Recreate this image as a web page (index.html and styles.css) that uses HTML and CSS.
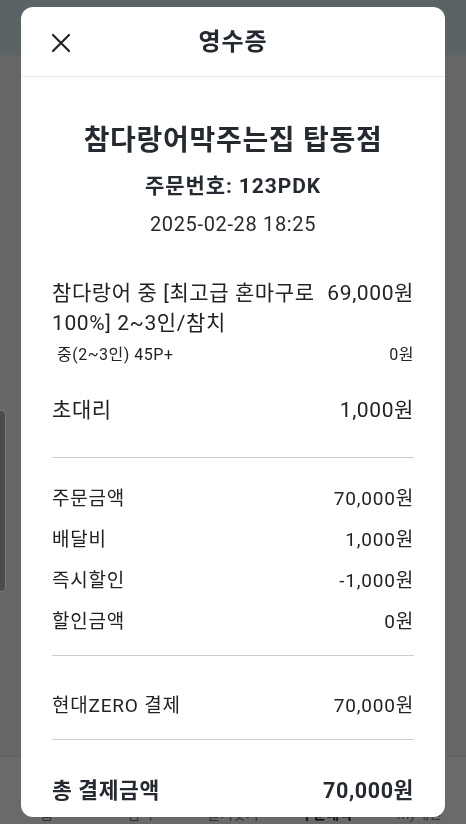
FILE: index.html
```html
<!DOCTYPE html>
<html lang="ko">
<head>
<meta charset="utf-8">
<title>영수증</title>
<link rel="stylesheet" href="styles.css">
</head>
<body>
<div class="page">
  <div class="topbar"></div>
  <div class="content">
    <div class="side-card"></div>
  </div>
  <nav class="tabbar">
    <span class="tab">홈</span>
    <span class="tab">검색</span>
    <span class="tab">즐겨찾기</span>
    <span class="tab tab-active">주문내역</span>
    <span class="tab">my배민</span>
  </nav>
</div>

<div class="modal">
  <header class="modal-header">
    <button class="close" aria-label="닫기">
      <svg width="20" height="20" viewBox="0 0 20 20"><path d="M2 2 L18 18 M18 2 L2 18" stroke="#222" stroke-width="2.2" stroke-linecap="round" fill="none"/></svg>
    </button>
    <h1 class="modal-title">영수증</h1>
  </header>
  <div class="modal-body">
    <h2 class="store">참다랑어막주는집 탑동점</h2>
    <p class="order-no">주문번호: 123PDK</p>
    <p class="date">2025-02-28 18:25</p>

    <section class="items">
      <div class="item-row">
        <span class="item-name">참다랑어 중 [최고급 혼마구로 100%] 2~3인/참치</span>
        <span class="item-price">69,000원</span>
      </div>
      <div class="option-row">
        <span>중(2~3인) 45P+</span>
        <span>0원</span>
      </div>
      <div class="item-row item-extra">
        <span class="item-name">초대리</span>
        <span class="item-price">1,000원</span>
      </div>
    </section>

    <section class="summary">
      <div class="sum-row"><span>주문금액</span><span>70,000원</span></div>
      <div class="sum-row"><span>배달비</span><span>1,000원</span></div>
      <div class="sum-row"><span>즉시할인</span><span>-1,000원</span></div>
      <div class="sum-row"><span>할인금액</span><span>0원</span></div>
    </section>

    <section class="payment">
      <div class="sum-row"><span>현대ZERO 결제</span><span>70,000원</span></div>
    </section>

    <section class="total">
      <div class="total-row"><span>총 결제금액</span><span>70,000원</span></div>
    </section>
  </div>
</div>
</body>
</html>
```

FILE: styles.css
```css
* { box-sizing: border-box; }

html, body {
  margin: 0;
  padding: 0;
  height: 100%;
}

body {
  font-family: Roboto, "Noto Sans CJK KR", "Noto Sans", sans-serif;
  background: #666666;
  color: #222;
  overflow: hidden;
}

.page {
  height: 824px;
  display: flex;
  flex-direction: column;
}

.topbar {
  height: 55px;
  background: #5c6367;
  flex: none;
}

.content {
  flex: 1;
  padding-top: 355px;
}

.side-card {
  width: 6px;
  height: 182px;
  background: #4b4b4b;
  border: 1px solid #7a7a7a;
  border-left: none;
  border-radius: 0 5px 5px 0;
}

.tabbar {
  flex: none;
  height: 68px;
  background: #6a6a6a;
  border-top: 1px solid #5f5f5f;
  display: grid;
  grid-template-columns: repeat(5, 1fr);
  align-items: end;
  padding-bottom: 2px;
}

.tab {
  text-align: center;
  font-size: 14px;
  line-height: 16px;
  color: #333;
}

.tab-active {
  font-weight: 700;
  color: #111;
}

.modal {
  position: fixed;
  left: 21px;
  top: 7px;
  width: 424px;
  height: 810px;
  background: #fff;
  border-radius: 12px;
  overflow: hidden;
}

.modal-header {
  height: 70px;
  border-bottom: 1px solid #e6e8ea;
  display: flex;
  align-items: center;
  justify-content: center;
  position: relative;
}

.close {
  position: absolute;
  left: 30px;
  top: 26px;
  width: 20px;
  height: 20px;
  padding: 0;
  border: none;
  background: none;
  display: block;
}

.close svg { display: block; }

.modal-title {
  margin: 0;
  font-size: 24px;
  letter-spacing: 1px;
  font-weight: 700;
  color: #252a31;
  line-height: 30px;
}

.modal-body {
  padding: 45px 31px 0;
}

.store {
  margin: 0;
  text-align: center;
  font-size: 28px;
  letter-spacing: 0.7px;
  font-weight: 700;
  line-height: 38px;
  color: #252a31;
}

.order-no {
  margin: 12px 0 0;
  text-align: center;
  font-size: 21px;
  letter-spacing: 0.9px;
  font-weight: 700;
  line-height: 28px;
  color: #252a31;
}

.date {
  margin: 11px 0 0;
  text-align: center;
  font-size: 20px;
  letter-spacing: 0.65px;
  line-height: 26px;
  color: #2a2a2a;
}

.items {
  margin-top: 41px;
  padding-bottom: 32px;
  border-bottom: 1px solid #c9ced2;
}

.item-row {
  display: flex;
  justify-content: space-between;
  gap: 10px;
  font-size: 21px;
  letter-spacing: 0.6px;
  line-height: 30px;
}

.item-name { flex: 1; }
.item-price { flex: none; }

.option-row {
  display: flex;
  justify-content: space-between;
  font-size: 16px;
  letter-spacing: 0.5px;
  line-height: 20px;
  margin-top: 7px;
  padding-left: 5px;
}

.item-extra {
  margin-top: 30px;
}

.summary {
  padding: 26px 0 18px;
  border-bottom: 1px solid #c9ced2;
  display: flex;
  flex-direction: column;
  gap: 11px;
}

.sum-row {
  display: flex;
  justify-content: space-between;
  font-size: 19px;
  letter-spacing: 0.8px;
  line-height: 30px;
}

.payment {
  padding: 35px 0 18px;
  border-bottom: 1px solid #c9ced2;
}

.total {
  padding-top: 36px;
}

.total-row {
  display: flex;
  justify-content: space-between;
  font-size: 21.5px;
  letter-spacing: 0.6px;
  line-height: 30px;
  font-weight: 700;
  color: #252a31;
}
```
